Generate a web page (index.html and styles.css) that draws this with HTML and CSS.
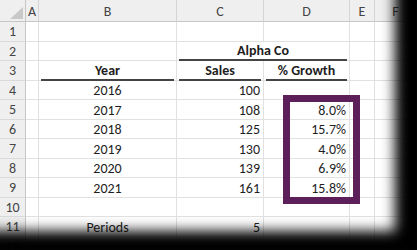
FILE: index.html
```html
<!DOCTYPE html>
<html>
<head>
<meta charset="utf-8">
<link rel="stylesheet" href="styles.css">
</head>
<body>
<div class="sheet">
  <div class="corner"><span class="tri"></span></div>
  <div class="colh">A</div><div class="colh">B</div><div class="colh">C</div><div class="colh">D</div><div class="colh">E</div><div class="colh last">F</div>

  <div class="rowh">1</div><div class="c"></div><div class="c"></div><div class="c"></div><div class="c"></div><div class="c"></div><div class="c"></div>

  <div class="rowh">2</div><div class="c"></div><div class="c"></div><div class="c span2"><div class="ul bold center">Alpha Co</div></div><div class="c"></div><div class="c"></div>

  <div class="rowh">3</div><div class="c"></div><div class="c"><div class="ul bold center">Year</div></div><div class="c"><div class="ul bold center">Sales</div></div><div class="c"><div class="ul bold center">% Growth</div></div><div class="c"></div><div class="c"></div>

  <div class="rowh">4</div><div class="c"></div><div class="c center">2016</div><div class="c right">100</div><div class="c right"></div><div class="c"></div><div class="c"></div>
  <div class="rowh">5</div><div class="c"></div><div class="c center">2017</div><div class="c right">108</div><div class="c right pct">8.0%</div><div class="c"></div><div class="c"></div>
  <div class="rowh">6</div><div class="c"></div><div class="c center">2018</div><div class="c right">125</div><div class="c right pct">15.7%</div><div class="c"></div><div class="c"></div>
  <div class="rowh">7</div><div class="c"></div><div class="c center">2019</div><div class="c right">130</div><div class="c right pct">4.0%</div><div class="c"></div><div class="c"></div>
  <div class="rowh">8</div><div class="c"></div><div class="c center">2020</div><div class="c right">139</div><div class="c right pct">6.9%</div><div class="c"></div><div class="c"></div>
  <div class="rowh">9</div><div class="c"></div><div class="c center">2021</div><div class="c right">161</div><div class="c right pct">15.8%</div><div class="c"></div><div class="c"></div>
  <div class="rowh">10</div><div class="c"></div><div class="c"></div><div class="c"></div><div class="c"></div><div class="c"></div><div class="c"></div>
  <div class="rowh">11</div><div class="c"></div><div class="c center">Periods</div><div class="c right">5</div><div class="c"></div><div class="c"></div><div class="c"></div>
  <div class="rowh">12</div><div class="c"></div><div class="c"></div><div class="c"></div><div class="c"></div><div class="c"></div><div class="c"></div>

  <div class="highlight"></div>
  <div class="shade"></div>
</div>
</body>
</html>
```

FILE: styles.css
```css
html, body {
  margin: 0;
  padding: 0;
  background: #ffffff;
}
.sheet {
  position: relative;
  width: 417px;
  height: 250px;
  overflow: hidden;
  display: grid;
  grid-template-columns: 26px 13px 138px 87px 86px 25px 42px;
  grid-template-rows: 22px repeat(12, 19.5px);
  font-family: "Carlito", "Lato", sans-serif;
  font-size: 14px;
  color: #1e1e1e;
}
.corner {
  background: #efefef;
  border-right: 1px solid #c6c6c6;
  border-bottom: 1px solid #c6c6c6;
  position: relative;
}
.tri {
  position: absolute;
  right: 2px;
  bottom: 2px;
  width: 0;
  height: 0;
  border-left: 13px solid transparent;
  border-bottom: 12px solid #c8c8c8;
}
.colh {
  background: #efefef;
  border-right: 1px solid #d4d4d4;
  border-bottom: 1px solid #c6c6c6;
  color: #444444;
  display: flex;
  align-items: center;
  justify-content: center;
  padding-top: 1px;
}
.rowh {
  background: #efefef;
  border-right: 1px solid #c6c6c6;
  border-bottom: 1px solid #dadada;
  color: #444444;
  display: flex;
  align-items: center;
  justify-content: center;
  padding-top: 1px;
}
.c {
  border-right: 1px solid #e1e1e1;
  border-bottom: 1px solid #e1e1e1;
  display: flex;
  align-items: flex-end;
  padding: 0 3px 0 3px;
  line-height: 17px;
  white-space: nowrap;
}
.span2 { grid-column: span 2; }
.center { justify-content: center; }
.right { justify-content: flex-end; }
.bold { font-weight: bold; }
.ul {
  flex: 1;
  display: flex;
  align-items: flex-end;
  margin: 0 -1px -1px -1px;
  border-bottom: 2px solid #444444;
}
.highlight {
  position: absolute;
  left: 283px;
  top: 95px;
  width: 63px;
  height: 95px;
  border: 7px solid #5c1f5a;
}
.shade {
  position: absolute;
  inset: 0;
  pointer-events: none;
  box-shadow: inset -22px -19px 13px #000000;
}
```
